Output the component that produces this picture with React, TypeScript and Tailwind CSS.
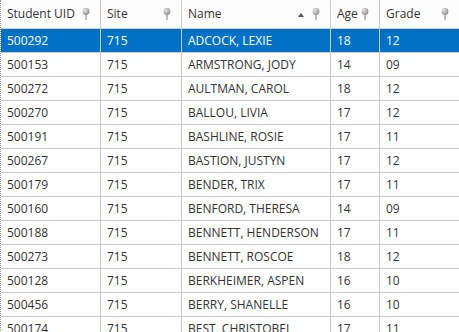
import React from "react";

const rows: [string, string, string, string, string][] = [
  ["500292", "715", "ADCOCK, LEXIE", "18", "12"],
  ["500153", "715", "ARMSTRONG, JODY", "14", "09"],
  ["500272", "715", "AULTMAN, CAROL", "18", "12"],
  ["500270", "715", "BALLOU, LIVIA", "17", "12"],
  ["500191", "715", "BASHLINE, ROSIE", "17", "11"],
  ["500267", "715", "BASTION, JUSTYN", "17", "12"],
  ["500179", "715", "BENDER, TRIX", "17", "11"],
  ["500160", "715", "BENFORD, THERESA", "14", "09"],
  ["500188", "715", "BENNETT, HENDERSON", "17", "11"],
  ["500273", "715", "BENNETT, ROSCOE", "18", "12"],
  ["500128", "715", "BERKHEIMER, ASPEN", "16", "10"],
  ["500456", "715", "BERRY, SHANELLE", "16", "10"],
  ["500174", "715", "BEST, CHRISTOBEL", "17", "11"],
];

function Pin() {
  return (
    <svg width="8" height="12" viewBox="0 0 8 12" className="shrink-0">
      <defs>
        <radialGradient id="pg" cx="0.35" cy="0.35" r="0.7">
          <stop offset="0" stopColor="#e8e8e8" />
          <stop offset="1" stopColor="#8a8a8a" />
        </radialGradient>
      </defs>
      <circle cx="4" cy="3.5" r="3.4" fill="url(#pg)" />
      <rect x="3.4" y="6.5" width="1.3" height="5.5" fill="#9a9a9a" />
    </svg>
  );
}

const headers = ["Student UID", "Site", "Name", "Age", "Grade"];
const cols = "grid grid-cols-[100px_81px_149px_49px_1fr]";

export default function App() {
  return (
    <div
      className="w-[459px] h-[332px] overflow-hidden bg-white border-l border-dotted border-[#9a9a9a] text-[12px] text-[#333333]"
      style={{ fontFamily: "'Open Sans', 'Noto Sans', sans-serif" }}
    >
      <div className={`${cols} h-[29px] border-b border-[#c9c9c9] bg-[#fdfdfd]`}>
        {headers.map((h, i) => (
          <div
            key={h}
            className={`flex items-center pl-[6px] pr-[10px] ${i < 4 ? "border-r border-[#c9c9c9]" : ""}`}
          >
            <span className="flex-1 truncate">{h}</span>
            {h === "Name" && (
              <svg width="6" height="4" viewBox="0 0 6 4" className="mr-[8px] mt-[2px]">
                <path d="M0 4 L3 0 L6 4 Z" fill="#555" />
              </svg>
            )}
            <Pin />
          </div>
        ))}
      </div>
      {rows.map((r, ri) => {
        const sel = ri === 0;
        return (
          <div
            key={ri}
            className={`${cols} h-[24px] border-b ${sel ? "bg-[#0072c6] text-white border-[#c9c9c9]" : "border-[#c9c9c9]"}`}
          >
            {r.map((c, ci) => (
              <div
                key={ci}
                className={`flex items-center pl-[6px] whitespace-nowrap overflow-hidden ${ci < 4 ? "border-r border-[#c9c9c9]" : ""}`}
              >
                {c}
              </div>
            ))}
          </div>
        );
      })}
    </div>
  );
}
